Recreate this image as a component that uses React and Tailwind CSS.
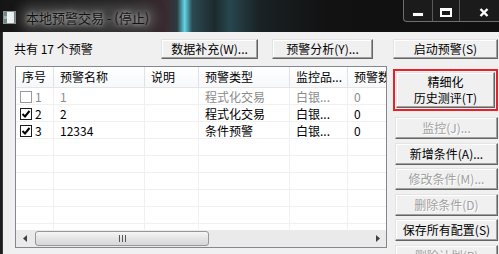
import React from 'react';

const cols = 'grid grid-cols-[38px_91px_54px_91px_58px_80px]';

function Btn({ children, disabled, className = '' }) {
  return (
    <div
      className={`flex items-center justify-center bg-[#f0f0f0] border border-t-[#e3e3e3] border-l-[#e3e3e3] border-r-[#646464] border-b-[#646464] shadow-[inset_-1px_-1px_0_#a0a0a0,inset_1px_1px_0_#ffffff] text-[12px] whitespace-nowrap ${
        disabled ? 'text-[#a0a0a0] [text-shadow:1px_1px_0_#ffffff]' : 'text-black'
      } ${className}`}
    >
      {children}
    </div>
  );
}

function CheckBox({ checked, dim }) {
  return (
    <svg width="12" height="12" viewBox="0 0 12 12" className="shrink-0">
      <rect x="0.5" y="0.5" width="11" height="11" fill="#fff" stroke={dim ? '#9a9a9a' : '#1a1a1a'} />
      {checked && <path d="M2.5 6 L5 8.5 L9.5 3" fill="none" stroke="#000" strokeWidth="2" />}
    </svg>
  );
}

const rows = [
  { no: '1', name: '1', type: '程式化交易', target: '白银...', count: '0', checked: false, dim: true },
  { no: '2', name: '2', type: '程式化交易', target: '白银...', count: '0', checked: true },
  { no: '3', name: '12334', type: '条件预警', target: '白银...', count: '0', checked: true },
];

export default function App() {
  const filler = Array.from({ length: 6 });

  return (
    <div className="w-[499px] h-[254px] overflow-hidden bg-[#161616] font-['Noto_Sans_CJK_SC','Liberation_Sans',sans-serif] text-[12px]">
      {/* title bar */}
      <div className="h-[32px] flex justify-between bg-[linear-gradient(90deg,#151515_0%,#1d1d1d_18%,#262223_28%,#3a2a2f_33%,#2b3b40_35.5%,#62d6e6_37%,#2c4a52_38.5%,#1c2a2d_43%,#27474e_46%,#1a2224_52%,#121212_65%,#101010_100%)]">
        <div className="flex items-center pl-[3px] pt-[3px] gap-[8px]">
          <svg width="13" height="13" viewBox="0 0 13 13">
            <rect x="0.5" y="0.5" width="12" height="12" fill="#dfe3e6" stroke="#8c9296" />
            <rect x="1" y="1" width="3" height="11" fill="#6e8a80" />
            <rect x="1" y="5" width="3" height="3" fill="#9fb5ad" />
            <rect x="4" y="1" width="8" height="11" fill="#eef2f3" />
            <rect x="11" y="1" width="1" height="11" fill="#7a8085" />
          </svg>
          <span className="text-[13px] leading-[18px] px-[2px] rounded-[8px] bg-[rgba(120,120,120,0.35)] text-[#121212] [text-shadow:0_0_4px_rgba(255,255,255,0.7),0_0_9px_rgba(255,255,255,0.5)] shadow-[0_0_10px_6px_rgba(120,120,120,0.35)]">
            本地预警交易 - (停止)
          </span>
        </div>
        <div className="self-start flex h-[22px] border-l border-b border-[#6e6e6e] rounded-bl-[4px] bg-[#1b1b1b] overflow-hidden">
          <div className="w-[28px] flex items-end justify-center pb-[4px]">
            <svg width="12" height="5" viewBox="0 0 12 5">
              <rect x="0.5" y="0.5" width="11" height="4" fill="#fff" stroke="#222" />
            </svg>
          </div>
          <div className="w-[27px] border-l border-[#5a5a5a] flex items-center justify-center pt-[4px]">
            <svg width="12" height="9" viewBox="0 0 12 9">
              <rect x="1" y="1" width="10" height="7" fill="none" stroke="#fff" strokeWidth="2" />
              <rect x="1" y="1" width="10" height="2" fill="#fff" />
            </svg>
          </div>
          <div className="w-[40px] border-l border-[#5a5a5a] flex items-center pl-[19px] pt-[4px]">
            <svg width="10" height="9" viewBox="0 0 10 9">
              <path d="M1.5 1 L8.5 8 M8.5 1 L1.5 8" stroke="#fff" strokeWidth="2.4" />
            </svg>
          </div>
        </div>
      </div>

      <div className="flex h-[222px]">
        <div className="w-[3px] bg-[#1e1e1e] border-r border-[#3a3a3a]" />
        <div className="flex-1 bg-[#f0f0f0] flex flex-col">
          {/* top row */}
          <div className="mt-[7px] h-[22px] flex items-center">
            <div className="ml-[11px] w-[147px]">共有 17 个预警</div>
            <Btn className="w-[97px] h-full">数据补充(W)...</Btn>
            <Btn className="ml-[14px] w-[101px] h-full">预警分析(Y)...</Btn>
            <Btn className="ml-[20px] w-[105px] h-full">启动预警(S)</Btn>
          </div>

          {/* main */}
          <div className="mt-[7px] flex pl-[12px]">
            <div className="w-[372px] h-[182px] border border-[#828790] bg-white flex flex-col overflow-hidden">
              <div className={`${cols} h-[21px] shrink-0 border-b border-[#e5e5e5] bg-[linear-gradient(#ffffff,#f7f8fa)]`}>
                {['序号', '预警名称', '说明', '预警类型', '监控品...', '预警数'].map((h) => (
                  <div key={h} className="flex items-center pl-[6px] border-r border-[#dfe2e6] whitespace-nowrap overflow-hidden">
                    {h}
                  </div>
                ))}
              </div>
              <div className="flex-1 overflow-hidden">
                {rows.map((r) => (
                  <div key={r.no} className={`${cols} h-[17px] border-b border-[#f0f0f0] ${r.dim ? 'text-[#8b8b8b]' : 'text-black'}`}>
                    <div className="flex items-center pl-[4px] gap-[3px] border-r border-[#f0f0f0]">
                      <CheckBox checked={r.checked} dim={r.dim} />
                      <span>{r.no}</span>
                    </div>
                    <div className="flex items-center pl-[6px] border-r border-[#f0f0f0]">{r.name}</div>
                    <div className="border-r border-[#f0f0f0]" />
                    <div className="flex items-center pl-[6px] border-r border-[#f0f0f0]">{r.type}</div>
                    <div className="flex items-center pl-[6px] border-r border-[#f0f0f0]">{r.target}</div>
                    <div className="flex items-center pl-[6px]">{r.count}</div>
                  </div>
                ))}
                {filler.map((_, i) => (
                  <div key={i} className={`${cols} h-[17px] border-b border-[#f0f0f0]`}>
                    <div className="border-r border-[#f0f0f0]" />
                    <div className="border-r border-[#f0f0f0]" />
                    <div className="border-r border-[#f0f0f0]" />
                    <div className="border-r border-[#f0f0f0]" />
                    <div className="border-r border-[#f0f0f0]" />
                    <div />
                  </div>
                ))}
              </div>
              {/* scrollbar */}
              <div className="h-[17px] shrink-0 flex items-center bg-[#eaeaea]">
                <div className="w-[18px] flex justify-center">
                  <svg width="4" height="7" viewBox="0 0 4 7">
                    <path d="M4 0 L0 3.5 L4 7 Z" fill="#404040" />
                  </svg>
                </div>
                <div className="ml-[1px] w-[174px] h-[15px] rounded-[3px] border border-[#979797] bg-[linear-gradient(#f6f6f6,#e4e4e4_50%,#d6d6d6)] flex items-center justify-center">
                  <svg width="7" height="7" viewBox="0 0 7 7">
                    <path d="M0.5 0 V7 M3.5 0 V7 M6.5 0 V7" stroke="#555" />
                  </svg>
                </div>
                <div className="flex-1" />
                <div className="w-[17px] flex justify-center">
                  <svg width="4" height="7" viewBox="0 0 4 7">
                    <path d="M0 0 L4 3.5 L0 7 Z" fill="#404040" />
                  </svg>
                </div>
              </div>
            </div>

            {/* right column */}
            <div className="ml-[6px] mt-[3px] flex flex-col">
              <div className="w-[105px] h-[42px] border-2 border-[#e8202a] p-[1px]">
                <Btn className="w-full h-full flex-col">
                  <span className="block leading-[16px]">精细化</span>
                  <span className="block leading-[16px]">历史测评(T)</span>
                </Btn>
              </div>
              <div className="ml-[2px] mt-[6px] flex flex-col gap-[3.6px]">
                <Btn disabled className="w-[103px] h-[22px]">监控(J)...</Btn>
                <Btn className="w-[103px] h-[22px]">新增条件(A)...</Btn>
                <Btn disabled className="w-[103px] h-[22px]">修改条件(M)...</Btn>
                <Btn disabled className="w-[103px] h-[22px]">删除条件(D)</Btn>
                <Btn className="w-[103px] h-[22px]">保存所有配置(S)</Btn>
                <Btn disabled className="w-[103px] h-[22px]">删除计划(P)</Btn>
              </div>
            </div>
          </div>
        </div>
      </div>
    </div>
  );
}
